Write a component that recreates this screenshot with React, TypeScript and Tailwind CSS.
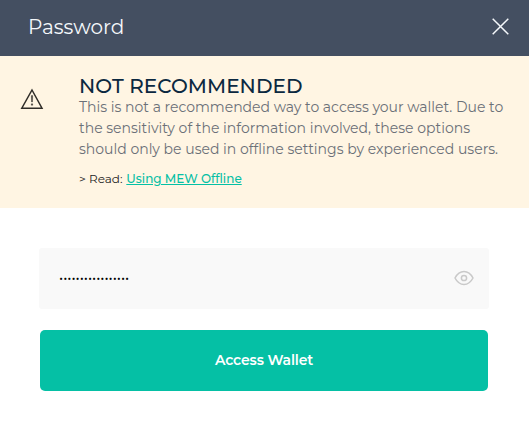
import { useState } from 'react';

const WARNING_LINES = [
  'This is not a recommended way to access your wallet. Due to',
  'the sensitivity of the information involved, these options',
  'should only be used in offline settings by experienced users.',
];

function Header() {
  return (
    <header className="flex h-14 items-center justify-between bg-[#444f61] pr-5 pb-[3px] pl-7 text-[#f5f8fb]">
      <h1 className="text-xl leading-6 font-normal">Password</h1>
      <button type="button" aria-label="Close">
        <svg width="17" height="17" viewBox="0 0 17 17" fill="none" stroke="currentColor" strokeWidth="1.5">
          <path d="M.7.7 16.3 16.3M16.3.7.7 16.3" />
        </svg>
      </button>
    </header>
  );
}

function Warning() {
  return (
    <section className="flex h-[152px] items-start bg-[#fff5e3] pl-5">
      <svg className="mt-8 shrink-0" width="24" height="22" viewBox="0 0 24 22" fill="none" stroke="#302d29">
        <path d="M12 2 22 20.2H1.8Z" strokeWidth="1.5" />
        <path d="M11.3 7.5h1.4l-.2 6.5h-1ZM11.3 15.8h1.4v1.5h-1.4Z" fill="#302d29" strokeWidth=".3" />
      </svg>
      <div className="mt-[19px] ml-[35px] whitespace-nowrap">
        <h2 className="text-xl leading-[22px] font-medium tracking-[0.07px] text-[#0b2840]">NOT RECOMMENDED</h2>
        <div className="text-sm leading-[21px] text-[#6b7078]">
          {WARNING_LINES.map((line) => (
            <p key={line}>{line}</p>
          ))}
        </div>
        <p className="mt-2.5 text-xs leading-[18px] text-[#222]">
          &gt; Read:{' '}
          <a href="#offline" className="ml-[0.6px] font-medium text-[#05c0a5] underline">
            Using MEW Offline
          </a>
        </p>
      </div>
    </section>
  );
}

function EyeIcon() {
  return (
    <svg width="20" height="16" viewBox="0 0 20 16" fill="none" stroke="#c9c9c9" strokeWidth="1.5">
      <path d="M1 8C3.2 3.8 6.1 1.5 10 1.5S16.8 3.8 19 8c-2.2 4.2-5.1 6.5-9 6.5S3.2 12.2 1 8Z" />
      <circle cx="10" cy="8" r="2.6" />
    </svg>
  );
}

export default function App() {
  const [visible, setVisible] = useState(false);

  return (
    <main className="h-[431px] w-[529px] overflow-hidden bg-white font-['Montserrat','Inter',sans-serif]">
      <Header />
      <Warning />
      <form className="pt-10 pr-10 pl-[39px]" onSubmit={(e) => e.preventDefault()}>
        <div className="flex h-[61px] items-center justify-between rounded-[3px] bg-[#f9f9f9] pr-[15px] pb-px pl-5">
          <input
            type={visible ? 'text' : 'password'}
            defaultValue="offlinepassword17"
            aria-label="Password"
            className="w-80 bg-transparent text-sm text-black outline-none"
          />
          <button type="button" aria-label="Show password" onClick={() => setVisible(!visible)}>
            <EyeIcon />
          </button>
        </div>
        <button
          type="submit"
          className="mt-[21px] ml-px h-[61px] w-[448px] rounded-[5px] bg-[#05c0a5] pb-px text-sm font-semibold tracking-[-0.14px] text-white"
        >
          Access Wallet
        </button>
      </form>
    </main>
  );
}
